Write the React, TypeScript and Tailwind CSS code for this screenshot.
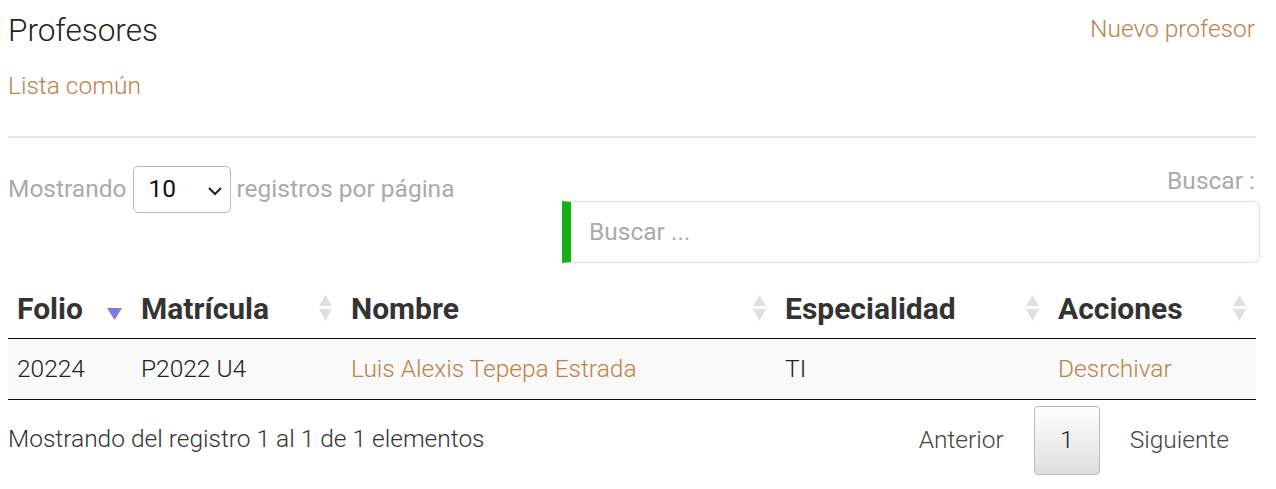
import React from 'react';

interface Column {
  label: string;
  width: string;
  active?: boolean;
}

const columns: Column[] = [
  { label: 'Folio', width: 'w-[124px]', active: true },
  { label: 'Matrícula', width: 'w-[210px]' },
  { label: 'Nombre', width: 'w-[434px]' },
  { label: 'Especialidad', width: 'w-[273px]' },
  { label: 'Acciones', width: '' },
];

function SortIcon({ active }: { active?: boolean }) {
  if (active) {
    return (
      <svg width="15" height="12" viewBox="0 0 15 12" className="absolute right-[10px] top-[28px]">
        <path d="M0 0 L15 0 L7.5 12 Z" fill="#7b7be3" />
      </svg>
    );
  }
  return (
    <svg width="15" height="26" viewBox="0 0 15 26" className="absolute right-[9px] top-[15px]">
      <path d="M1 11 L14 11 L7.5 0 Z" fill="#e0e0e0" />
      <path d="M1 14 L14 14 L7.5 26 Z" fill="#e0e0e0" />
    </svg>
  );
}

export default function App() {
  return (
    <div className="pl-[8px] pr-[20px] pt-[12px] bg-white font-['Roboto',sans-serif] text-[#333] text-[24.5px]">
      <div className="flex justify-between items-start">
        <h1 className="text-[31.5px] font-light text-[#222] leading-[38px]">Profesores</h1>
        <a href="#" className="text-[24.5px] font-light text-[#c0804a] leading-[30px] pt-[2px] pr-[1px]">
          Nuevo profesor
        </a>
      </div>
      <a href="#" className="block mt-[21px] font-light text-[#c0804a] leading-[30px]">
        Lista común
      </a>
      <hr className="mt-[35px] border-t-2 border-[#e6e6e6]" />

      <div className="flex justify-between mt-[28px]">
        <div className="flex items-center gap-[6px] text-[#aaa] h-[47px]">
          <span>Mostrando</span>
          <div className="relative w-[98px] h-[47px] border border-[#bbb] rounded-[5px] flex items-center pl-[15px] text-[#111]">
            10
            <svg width="16" height="10" viewBox="0 0 16 10" className="absolute right-[7px] top-[19px]">
              <path d="M2 2 L8 8 L14 2" stroke="#222" strokeWidth="2" fill="none" />
            </svg>
          </div>
          <span>registros por página</span>
        </div>
        <div className="flex flex-col items-end w-[698px] -mr-[4px]">
          <label className="leading-[30px] text-[#aaa] mr-[5px]">Buscar :</label>
          <div className="mt-[5px] w-full h-[62px] flex items-center border border-[#e0e0e0] border-l-[9px] border-l-[#14b014] rounded-r-[6px] pl-[18px] text-[#aaa]">
            Buscar ...
          </div>
        </div>
      </div>

      <table className="w-full mt-[17px] border-collapse">
        <thead>
          <tr className="border-b border-[#111]">
            {columns.map((c) => (
              <th
                key={c.label}
                className={`relative ${c.width} h-[58px] pl-[9px] text-left text-[30px] font-bold text-[#333]`}
              >
                {c.label}
                <SortIcon active={c.active} />
              </th>
            ))}
          </tr>
        </thead>
        <tbody>
          <tr className="bg-[#f9f9f9] border-b border-[#111] font-light">
            <td className="h-[61px] pl-[9px] pt-[2px] text-[#222]">20224</td>
            <td className="pl-[9px] pt-[2px] text-[#222]">P2022 U4</td>
            <td className="pl-[9px] pt-[2px] text-[#c0804a]">Luis Alexis Tepepa Estrada</td>
            <td className="pl-[9px] pt-[2px] text-[#222]">TI</td>
            <td className="pl-[9px] pt-[2px] text-[#c0804a]">Desrchivar</td>
          </tr>
        </tbody>
      </table>

      <div className="flex justify-between items-center mt-[6px]">
        <div className="font-light text-[#333] mt-[-1px]">
          Mostrando del registro 1 al 1 de 1 elementos
        </div>
        <div className="flex items-center font-light text-[#444] mr-[27px]">
          <span>Anterior</span>
          <span className="mx-[30px] w-[66px] h-[69px] flex items-center justify-center border border-[#bbb] rounded-[4px] bg-gradient-to-b from-white to-[#dedede] text-[#223]">
            1
          </span>
          <span>Siguiente</span>
        </div>
      </div>
    </div>
  );
}
